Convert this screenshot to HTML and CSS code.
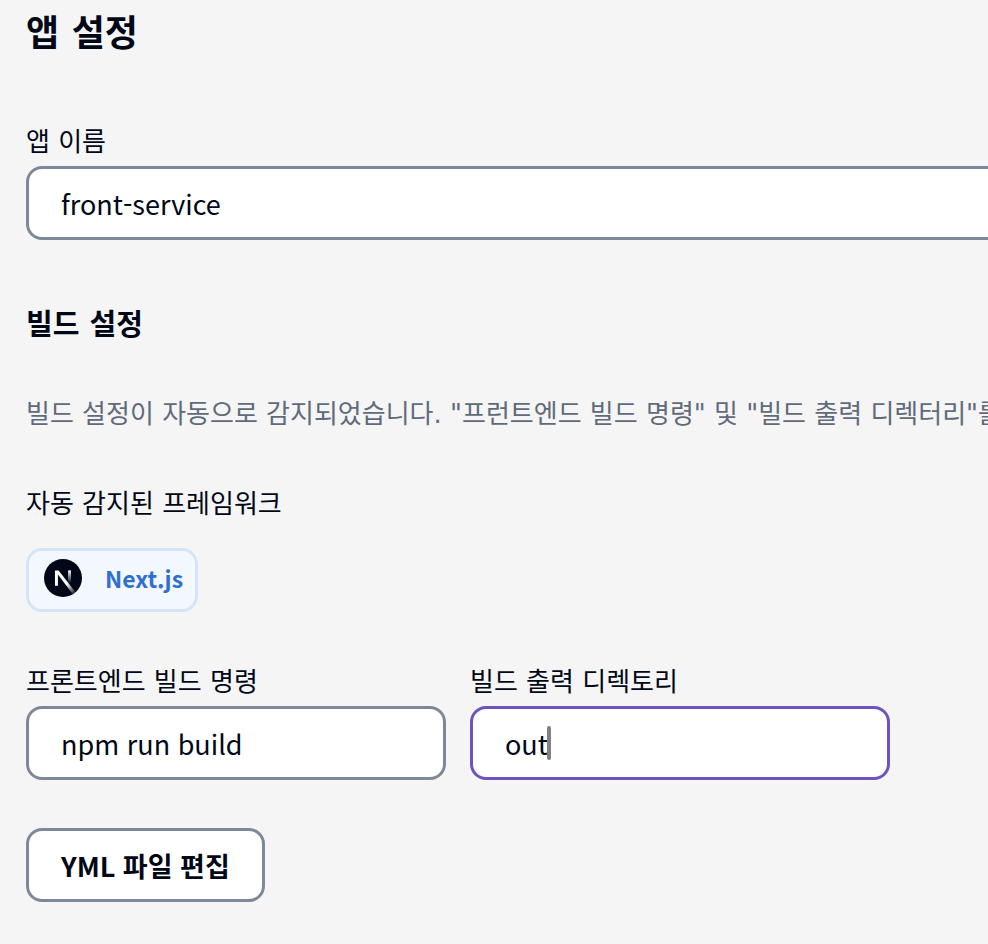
FILE: index.html
```html
<!DOCTYPE html>
<html lang="ko">
<head>
    <meta charset="UTF-8">
    <meta name="viewport" content="width=device-width, initial-scale=1.0">
    <title>앱 설정</title>
    <link rel="stylesheet" href="styles.css">
</head>
<body>
    <main class="settings">
        <h1>앱 설정</h1>
        <div class="field field-wide">
            <label for="appName">앱 이름</label>
            <input type="text" id="appName" value="front-service">
        </div>

        <h2>빌드 설정</h2>
        <p class="description">빌드 설정이 자동으로 감지되었습니다. "프런트엔드 빌드 명령" 및 "빌드 출력 디렉터리"를</p>

        <p class="framework-label">자동 감지된 프레임워크</p>
        <div class="framework">
            <svg class="framework-logo" viewBox="0 0 180 180" aria-hidden="true">
                <defs>
                    <linearGradient id="diagonal" x1="109" y1="116" x2="150" y2="168" gradientUnits="userSpaceOnUse">
                        <stop stop-color="#fff"/>
                        <stop offset="1" stop-color="#fff" stop-opacity="0"/>
                    </linearGradient>
                    <linearGradient id="stem" x1="121" y1="54" x2="121" y2="115" gradientUnits="userSpaceOnUse">
                        <stop stop-color="#fff"/>
                        <stop offset="1" stop-color="#fff" stop-opacity="0"/>
                    </linearGradient>
                </defs>
                <circle cx="90" cy="90" r="90" fill="#000716"/>
                <path fill="url(#diagonal)" d="M149.5 157.5 69.1 54H52v73h14V73.4l70.5 93.5a90 90 0 0 0 13-9.4z"/>
                <path fill="url(#stem)" d="M114 54h14v72h-14z"/>
            </svg>
            <span>Next.js</span>
        </div>

        <div class="build-fields">
            <div class="field">
                <label for="buildCommand">프론트엔드 빌드 명령</label>
                <input type="text" id="buildCommand" value="npm run build">
            </div>
            <div class="field field-active">
                <label for="outputDir">빌드 출력 디렉토리</label>
                <input type="text" id="outputDir" value="out">
                <span class="caret"></span>
            </div>
        </div>

        <button type="button" class="edit-button">YML 파일 편집</button>
    </main>
</body>
</html>
```

FILE: styles.css
```css
* {
    box-sizing: border-box;
}
body {
    margin: 0;
    background-color: #f5f5f5;
    color: #000716;
    font-family: "DejaVu Sans", "Noto Sans CJK KR", sans-serif;
    font-size: 26px;
    line-height: 32px;
    overflow-x: hidden;
}
.settings {
    padding: 10px 0 42px 26px;
}
h1 {
    margin: 0 0 68px;
    font-size: 36px;
    line-height: 48px;
}
h2 {
    margin: 65px 0 53px;
    font-size: 29px;
    line-height: 40px;
}
.field {
    display: flex;
    flex-direction: column;
    gap: 8px;
    position: relative;
}
/* runs past the right edge of the window */
.field-wide {
    margin-right: -24px;
}
input {
    width: 100%;
    height: 74px;
    padding: 0 32px;
    border: 3px solid #7d8998;
    border-radius: 16px;
    background-color: #fff;
    color: inherit;
    font-family: "Noto Sans CJK KR", sans-serif;
    font-size: 27px;
    outline: none;
}
.description {
    margin: 0 0 58px;
    color: #5f6b7a;
    white-space: nowrap;
}
.framework-label {
    margin: 0 0 28px;
}
.framework {
    display: inline-flex;
    align-items: center;
    gap: 23px;
    height: 64px;
    padding: 0 12px 4px 15px;
    border: 3px solid #d5e5f7;
    border-radius: 16px;
    background-color: #f2f8fd;
    color: #2f6fd0;
    font-family: "Noto Sans CJK KR", sans-serif;
    font-size: 23px;
    font-weight: bold;
    vertical-align: top;
}
.framework-logo {
    width: 38px;
    height: 38px;
}
.build-fields {
    display: grid;
    grid-template-columns: repeat(2, minmax(0, 420px));
    gap: 24px;
    margin: 54px 98px 48px 0;
}
.field-active input {
    border-color: #6f52bd;
}
.caret {
    position: absolute;
    left: 77px;
    bottom: 20px;
    width: 4px;
    height: 34px;
    border-radius: 2px;
    background-color: #808084;
}
.edit-button {
    height: 74px;
    padding: 0 32px;
    border: 3px solid #7d8998;
    border-radius: 16px;
    background-color: #fff;
    color: inherit;
    font-family: "Noto Sans CJK KR", sans-serif;
    font-size: 27px;
    font-weight: bold;
    cursor: pointer;
}
.edit-button:hover {
    background-color: #f4f4f4;
}
```
